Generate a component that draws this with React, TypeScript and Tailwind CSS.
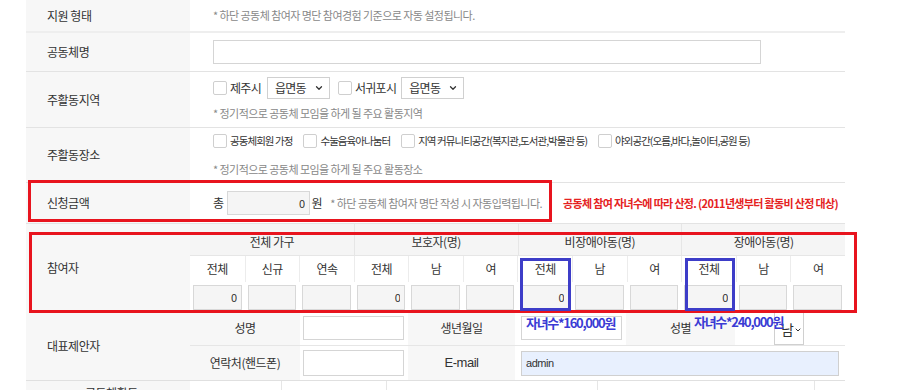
import { ChevronDown } from "lucide-react"

// application form snapshot: community activity grant (공동체 신청서)

const TH = "w-[164px] shrink-0 bg-[#f7f7f7] pl-[21px] flex items-center text-[12px] text-[#333]"
const NOTE = "text-[11px] text-[#888] whitespace-nowrap tracking-[-0.05em]"

function Check({ className = "" }: { className?: string }) {
  return <span className={`inline-block shrink-0 w-[14px] h-[14px] border border-[#cfcfcf] rounded-[2px] bg-white ${className}`} />
}

function Select({ label, className = "" }: { label: string; className?: string }) {
  return (
    <div className={`h-[22px] border border-[#d0d0d0] bg-white flex items-center justify-between pl-[7px] pr-[5px] text-[12px] text-[#333] ${className}`}>
      <span>{label}</span>
      <ChevronDown className="w-[10px] h-[10px]" strokeWidth={3} />
    </div>
  )
}

const SUB_COLS = ["전체", "신규", "연속", "전체", "남", "여", "전체", "남", "여", "전체", "남", "여"]
const SUB_VALUES = ["0", "", "", "0", "", "", "0", "", "", "0", "", ""]
const GROUPS = ["전체 가구", "보호자(명)", "비장애아동(명)", "장애아동(명)"]
const PLACES = ["공동체회원 가정", "수눌음육아나눔터", "지역 커뮤니티공간(복지관,도서관,박물관 등)", "야외공간(오름,바다,놀이터,공원 등)"]

export default function App() {
  return (
    <div className="relative w-[900px] h-[390px] overflow-hidden bg-white text-[#333] font-['Noto_Sans_CJK_KR','Noto_Sans',sans-serif] [font-feature-settings:'palt'] tracking-[-0.03em]">
      <div className="ml-[26px] w-[819px]">
        {/* 지원 형태 */}
        <div className="flex h-[33px] border-b-2 border-[#eeeeee]">
          <div className={TH}>지원 형태</div>
          <div className="flex-1 pl-[23px] flex items-center">
            <p className={NOTE}>* 하단 공동체 참여자 명단 참여경험 기준으로 자동 설정됩니다.</p>
          </div>
        </div>

        {/* 공동체명 */}
        <div className="flex h-[39px] border-b border-[#e3e3e3]">
          <div className={TH}>공동체명</div>
          <div className="flex-1 pl-[23px] flex items-center">
            <input className="w-[548px] h-[24px] border border-[#d5d5d5] bg-white outline-none" />
          </div>
        </div>

        {/* 주활동지역 */}
        <div className="flex h-[56px] border-b border-[#e3e3e3]">
          <div className={TH}>주활동지역</div>
          <div className="flex-1 pl-[23px] flex flex-col justify-center gap-[6px]">
            <div className="flex items-center text-[12px] tracking-[-0.06em]">
              <Check />
              <span className="ml-[3px]">제주시</span>
              <Select label="읍면동" className="ml-[6px] w-[63px]" />
              <Check className="ml-[8px]" />
              <span className="ml-[3px]">서귀포시</span>
              <Select label="읍면동" className="ml-[5px] w-[63px]" />
            </div>
            <p className={NOTE}>* 정기적으로 공동체 모임을 하게 될 주요 활동지역</p>
          </div>
        </div>

        {/* 주활동장소 */}
        <div className="flex h-[55px] border-b border-[#e3e3e3]">
          <div className={TH}>주활동장소</div>
          <div className="flex-1 pl-[23px] flex flex-col justify-center gap-[12px]">
            <div className="flex items-center text-[10.5px] tracking-[-0.09em] whitespace-nowrap">
              {PLACES.map((p, i) => (
                <span key={p} className={`flex items-center ${i > 0 ? "ml-[11px]" : ""}`}>
                  <Check />
                  <span className="ml-[3px]">{p}</span>
                </span>
              ))}
            </div>
            <p className={NOTE}>* 정기적으로 공동체 모임을 하게 될 주요 활동장소</p>
          </div>
        </div>

        {/* 신청금액 */}
        <div className="flex h-[41px] border-b border-[#e3e3e3]">
          <div className={TH}>신청금액</div>
          <div className="flex-1 pl-[23px] flex items-center text-[12px]">
            <div className="w-[350px] shrink-0 flex items-center">
              <span>총</span>
              <input readOnly value="0" className="ml-[3px] w-[83px] h-[24px] border border-[#d8d8d8] bg-[#f5f5f5] text-right pr-[4px] text-[11px] outline-none" />
              <span className="ml-[2px]">원</span>
              <span className={`ml-[8px] ${NOTE}`}>* 하단 공동체 참여자 명단 작성 시 자동입력됩니다.</span>
            </div>
            <span className="text-[11px] font-bold text-[#e52222] whitespace-nowrap tracking-[-0.06em]">공동체 참여 자녀수에 따라 산정. (2011년생부터 활동비 산정 대상)</span>
          </div>
        </div>

        {/* 참여자 */}
        <div className="flex h-[87px]">
          <div className={TH}>참여자</div>
          <div className="flex-1 flex flex-col">
            <div className="grid grid-cols-4 h-[32px] bg-[#f5f5f5] border-b border-[#e6e6e6]">
              {GROUPS.map((g, i) => (
                <div key={g} className={`flex items-center justify-center pt-[5px] text-[12px] ${i > 0 ? "border-l border-[#e6e6e6]" : ""}`}>{g}</div>
              ))}
            </div>
            <div className="grid grid-cols-12 h-[26px]">
              {SUB_COLS.map((c, i) => (
                <div key={i} className={`flex items-center justify-center text-[12px] ${i > 0 ? "border-l border-[#ececec]" : ""}`}>{c}</div>
              ))}
            </div>
            <div className="grid grid-cols-12 h-[29px] items-center">
              {SUB_VALUES.map((v, i) => (
                <div key={i} className="px-[3px]">
                  <input readOnly value={v} className="w-full h-[25px] border border-[#d8d8d8] bg-[#f5f5f5] text-right pr-[4px] text-[11px] outline-none" />
                </div>
              ))}
            </div>
          </div>
        </div>

        {/* 대표제안자 */}
        <div className="flex h-[70px] border-b border-[#e0e0e0]">
          <div className={TH}>대표제안자</div>
          <div className="flex-1 flex flex-col text-[12px]">
            <div className="grid grid-cols-[110px_108px_107px_111px_109px_110px] h-[35px] border-b border-[#e6e6e6]">
              <div className="bg-[#f7f7f7] flex items-center justify-center">성명</div>
              <div className="flex items-center px-[3px]"><input className="w-[101px] h-[24px] border border-[#d5d5d5] outline-none" /></div>
              <div className="bg-[#f7f7f7] flex items-center justify-center">생년월일</div>
              <div className="flex items-center px-[6px]"><input className="w-[101px] h-[24px] border border-[#d5d5d5] outline-none" /></div>
              <div className="bg-[#f7f7f7] flex items-center justify-center">성별</div>
              <div className="flex items-center">
                <div className="ml-[39px] w-[30px] h-[34px] border border-[#d0d0d0] bg-white flex items-center pt-[3px] pl-[6px] gap-[1px] text-[14px]">
                  남<ChevronDown className="w-[8px] h-[8px]" strokeWidth={3} />
                </div>
              </div>
            </div>
            <div className="grid grid-cols-[110px_108px_107px_330px] h-[34px]">
              <div className="bg-[#f7f7f7] flex items-center justify-center">연락처(핸드폰)</div>
              <div className="flex items-center px-[3px]"><input className="w-[101px] h-[26px] border border-[#d5d5d5] outline-none" /></div>
              <div className="bg-[#f7f7f7] flex items-center justify-center font-['Liberation_Sans',sans-serif] text-[13px]">E-mail</div>
              <div className="flex items-center pl-[6px] pr-[6px]">
                <input readOnly value="admin" className="w-full h-[25px] border border-[#d0d0d0] bg-[#e8f0fe] pl-[4px] text-[11px] font-['Liberation_Sans',sans-serif] outline-none" />
              </div>
            </div>
          </div>
        </div>

        {/* 공동체활동 (cut off) */}
        <div className="flex h-[20px]">
          <div className="w-[164px] shrink-0 bg-[#f7f7f7] pl-[59px] pt-[3px] text-[12px]">공동체활동</div>
          <div className="flex-1 grid grid-cols-[92px_105px_211px_217px_30px]">
            <div className="border-r border-[#e6e6e6]" />
            <div className="border-r border-[#e6e6e6]" />
            <div className="border-r border-[#e6e6e6]" />
            <div className="border-r border-[#e6e6e6]" />
            <div />
          </div>
        </div>
      </div>

      {/* annotations */}
      <div className="absolute left-[28px] top-[180px] w-[524px] h-[42px] border-[3px] border-[#e8141e] pointer-events-none" />
      <div className="absolute left-[29px] top-[232px] w-[828px] h-[81px] border-[3px] border-[#e8141e] pointer-events-none" />
      <div className="absolute left-[520px] top-[258px] w-[51px] h-[53px] border-[3px] border-[#3d3dc8] pointer-events-none" />
      <div className="absolute left-[685px] top-[258px] w-[50px] h-[53px] border-[3px] border-[#3d3dc8] pointer-events-none" />
      <span className="absolute left-[526px] top-[313px] text-[13px] font-bold tracking-[-0.1em] text-[#3b3bd4]">자녀수*160,000원</span>
      <span className="absolute left-[694px] top-[312px] text-[13px] font-bold tracking-[-0.1em] text-[#3b3bd4]">자녀수*240,000원</span>
    </div>
  )
}
